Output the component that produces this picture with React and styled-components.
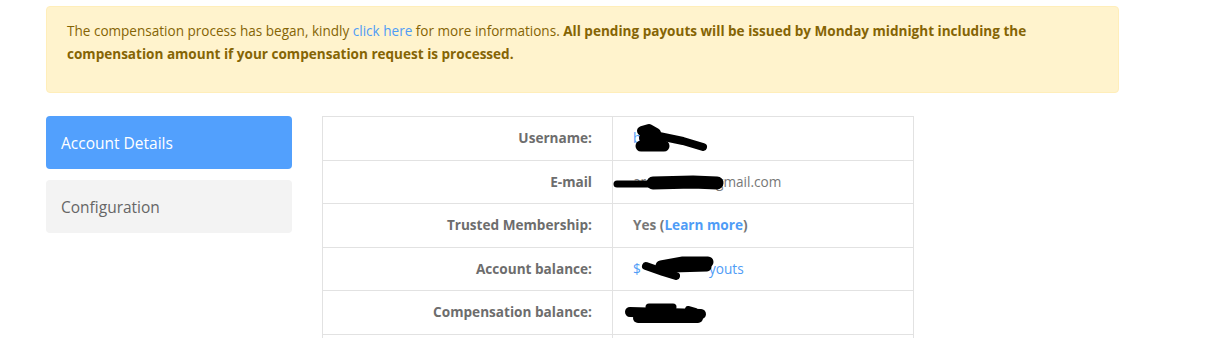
import React from 'react';
import styled, { createGlobalStyle } from 'styled-components';

const GlobalStyle = createGlobalStyle`
  body {
    margin: 0;
    background: #fff;
    font-family: "Open Sans", "Liberation Sans", sans-serif;
    font-size: 13.6px;
    color: #777;
  }
`;

const Page = styled.div`
  padding: 6px 0 0 46px;
  width: 1073px;
`;

const Alert = styled.div`
  background: #fff3cd;
  border: 1px solid #ffeeba;
  border-radius: 4px;
  color: #856404;
  padding: 13px 20px 0 20px;
  height: 72px;
  > p {
    margin: 0;
    line-height: 23px;
    font-size: 13.55px;
  }
  a {
    color: #4f9cf6;
    text-decoration: none;
  }
  b {
    font-weight: 700;
  }
`;

const Main = styled.div`
  display: flex;
  gap: 30px;
  margin-top: 23px;
`;

const Sidebar = styled.div`
  width: 246px;
  display: flex;
  flex-direction: column;
  gap: 11px;
`;

const NavItem = styled.div`
  height: 53px;
  display: flex;
  align-items: center;
  padding: 0 15px;
  border-radius: 4px;
  font-size: 15.5px;
  background: ${p => (p.active ? '#52a0fd' : '#f3f3f3')};
  color: ${p => (p.active ? '#fff' : '#666')};
`;

const Table = styled.table`
  width: 592px;
  border-collapse: collapse;
  td {
    border: 1px solid #e2e2e2;
    padding: 11px 20px;
    line-height: 20.5px;
    font-size: 13.6px;
  }
`;

const Label = styled.td`
  width: 249px;
  text-align: right;
  font-weight: 700;
  color: #6d6d6d;
`;

const Value = styled.td`
  color: #777;
  font-weight: ${p => (p.bold ? 700 : 400)};
  a {
    color: #4f9cf6;
    text-decoration: none;
    font-weight: inherit;
  }
`;

const Redacted = styled.span`
  position: relative;
  display: inline-block;
  width: ${p => p.w || 0}px;
  vertical-align: top;
  > svg {
    position: absolute;
    left: 0;
    top: 0;
    overflow: visible;
  }
`;

const Scribble = ({ d }) => (
  <svg width="1" height="1" viewBox="0 0 1 1">
    {d.map((p, i) => (
      <path key={i} d={p[0]} stroke="#000" strokeWidth={p[1]} strokeLinecap="round" strokeLinejoin="round" fill="none" />
    ))}
  </svg>
);

export default function App() {
  return (
    <>
      <GlobalStyle />
      <Page>
        <Alert>
          <p>
            The compensation process has began, kindly <a href="#">click here</a> for more informations.{' '}
            <b>All pending payouts will be issued by Monday midnight including the compensation amount if your compensation request is processed.</b>
          </p>
        </Alert>
        <Main>
          <Sidebar>
            <NavItem active>Account Details</NavItem>
            <NavItem>Configuration</NavItem>
          </Sidebar>
          <Table>
            <tbody>
              <tr>
                <Label>Username:</Label>
                <Value>
                  <Redacted w={10}>
                    <a href="#">b</a>
                    <Scribble
                      d={[
                        ['M9 3 L16 1 L23 5', 10],
                        ['M11 10 L29 10', 10],
                        ['M8 18 L31 18', 11],
                        ['M26 8 L50 13 L70 19', 8],
                      ]}
                    />
                  </Redacted>
                </Value>
              </tr>
              <tr>
                <Label>E-mail</Label>
                <Value>
                  <Redacted w={83}>
                    ar
                    <Scribble
                      d={[
                        ['M-16 12 L20 12', 7],
                        ['M20 11 L60 10 L84 11', 13],
                      ]}
                    />
                  </Redacted>
                  gmail.com
                </Value>
              </tr>
              <tr>
                <Label>Trusted Membership:</Label>
                <Value bold>
                  Yes (<a href="#">Learn more</a>)
                </Value>
              </tr>
              <tr>
                <Label>Account balance:</Label>
                <Value>
                  <a href="#">
                    <Redacted w={76}>
                      $
                      <Scribble
                        d={[
                          ['M13 7 L30 13 L43 17', 8],
                          ['M28 7 L50 3 L75 3', 11],
                          ['M40 9 L74 8', 9],
                        ]}
                      />
                    </Redacted>
                    youts
                  </a>
                </Value>
              </tr>
              <tr>
                <Label>Compensation balance:</Label>
                <Value>
                  <Redacted w={70}>
                    &nbsp;
                    <Scribble
                      d={[
                        ['M-3 10 L68 12', 10],
                        ['M5 16 L65 16', 10],
                        ['M16 5 L40 5', 7],
                        ['M55 7 L62 9', 6],
                      ]}
                    />
                  </Redacted>
                </Value>
              </tr>
              <tr>
                <Label>&nbsp;</Label>
                <Value>&nbsp;</Value>
              </tr>
            </tbody>
          </Table>
        </Main>
      </Page>
    </>
  );
}
